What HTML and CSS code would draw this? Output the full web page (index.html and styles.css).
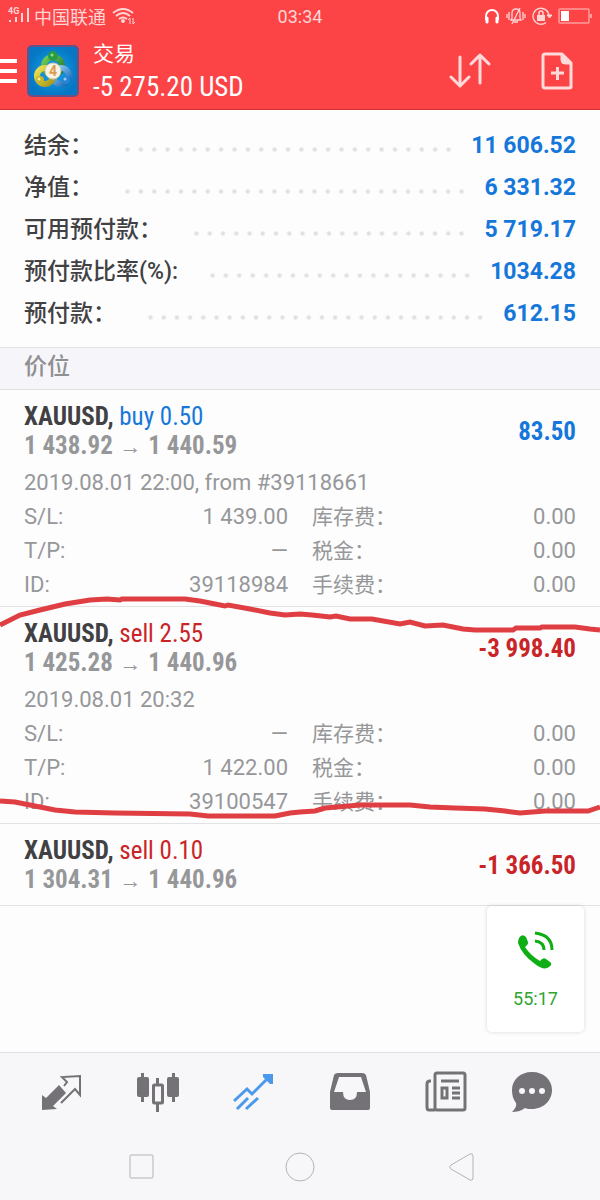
FILE: index.html
```html
<!DOCTYPE html>
<html lang="zh-CN">
<head>
    <meta charset="UTF-8">
    <meta name="viewport" content="width=device-width, initial-scale=1.0">
    <title>交易</title>
    <link rel="stylesheet" href="styles.css">
</head>
<body>
    <header class="header">
        <div class="status">
            <div class="status-left">
                <svg width="24" height="18" viewBox="0 0 24 18" fill="#ffd5d5">
                    <path d="M1 13h2v2H1zM7 10h2v5H7zM13 6h2v9h-2zM19 1h2v14h-2z"/>
                    <text x="0" y="7" class="signal-type">4G</text>
                </svg>
                <span>中国联通</span>
                <svg width="24" height="18" viewBox="0 0 24 18" fill="none" stroke="#ffd5d5" stroke-width="2">
                    <path d="M1 6q10-8 20 0M4 9q7-6 14 0M7 12q4-3 8 0"/>
                    <circle cx="11" cy="14" r="1"/>
                    <path d="M18 17v-6l-2 2M21 11v6l2-2" stroke-width="1"/>
                </svg>
            </div>
            <span class="clock">03:34</span>
            <div class="status-right">
                <svg width="16" height="16" viewBox="0 0 16 16" fill="none" stroke="#fff" stroke-width="2">
                    <path d="M2 12V8a6 6 0 0 1 12 0v4"/>
                    <path d="M3 10v4M13 10v4" stroke-width="3" stroke-linecap="round"/>
                </svg>
                <svg width="20" height="18" viewBox="0 0 20 18" fill="none" stroke="#ffd5d5" stroke-width="1">
                    <path d="M5 13l1-2V6q0-4 4-4t4 4v5l1 2zM8 15h4M14 1L6 17M1 7v4M3 5v8M17 5v8M19 7v4" stroke-width="1.3"/>
                </svg>
                <svg width="20" height="18" viewBox="0 0 20 18" fill="none" stroke="#ffd5d5">
                    <path d="M14 15.500A8 8 0 1 1 17 9" stroke-width="1.3"/>
                    <path d="M15 8h5l-2.500 3z" fill="#ffd5d5"/>
                    <path d="M5 8h8v6H5z" fill="#ffd5d5" stroke="none"/>
                    <path d="M7 8V6q0-2 2-2t2 2v2" stroke-width="1.5"/>
                </svg>
                <svg width="34" height="16" viewBox="0 0 34 16">
                    <rect x="1" y="1" width="30" height="14" rx="1" fill="none" stroke="#ff9c9c" stroke-width="1.500"/>
                    <path d="M3 3h8v10H3z" fill="#fff"/>
                    <path d="M32 6h2v4h-2z" fill="#ff9c9c"/>
                </svg>
            </div>
        </div>
        <div class="toolbar">
            <button class="menu" type="button" aria-label="菜单">
                <svg width="17" height="26" viewBox="0 0 17 26"><path d="M0 3h17M0 13h17M0 23h17" stroke="#fff" stroke-width="4"/></svg>
            </button>
            <svg class="logo" width="52" height="52" viewBox="0 0 52 52">
                <defs>
                    <radialGradient id="sky"><stop offset="0" stop-color="#18a5ea"/><stop offset="1" stop-color="#0577c4"/></radialGradient>
                    <linearGradient id="green" x1="0" y1="0" x2="1" y2="1"><stop offset="0" stop-color="#72cf56"/><stop offset="1" stop-color="#18752e"/></linearGradient>
                    <linearGradient id="gold" x1="0" y1="0" x2="1" y2="1"><stop offset="0" stop-color="#efe052"/><stop offset="1" stop-color="#a6981c"/></linearGradient>
                    <linearGradient id="blue" x1="0" y1="0" x2="1" y2="1"><stop offset="0" stop-color="#9bd6fb"/><stop offset="1" stop-color="#1565b4"/></linearGradient>
                </defs>
                <rect x="1" y="1" width="50" height="50" rx="4" fill="url(#sky)" stroke="#6a5089" stroke-width="2"/>
                <g fill="none" stroke-width="6">
                    <circle cx="26" cy="21" r="9" stroke="url(#green)"/>
                    <circle cx="34" cy="31" r="8" stroke="url(#blue)"/>
                    <circle cx="18" cy="31" r="8" stroke="url(#gold)"/>
                </g>
                <circle cx="26" cy="11" r="5" fill="#2a9b47"/>
                <circle cx="13" cy="35" r="4" fill="#c7b42a"/>
                <circle cx="39" cy="35" r="4" fill="#2684d4"/>
                <circle cx="25" cy="10" r="1.500" fill="#8fdc86"/>
                <circle cx="12" cy="34" r="1.500" fill="#f7f08f"/>
                <circle cx="38" cy="34" r="1.500" fill="#8fcdf7"/>
                <circle cx="26" cy="26" r="8" fill="#f8f2e4" stroke="#cfc9ae"/>
                <text x="26" y="31" class="logo-number">4</text>
            </svg>
            <div class="account">
                <h1>交易</h1>
                <p>-5 275.20 USD</p>
            </div>
            <div class="actions">
                <button type="button" aria-label="排序">
                    <svg width="42" height="38" viewBox="0 0 42 38" fill="none" stroke="#ffdada" stroke-width="3" stroke-linecap="round" stroke-linejoin="round"><path d="M11 5v29M2 25l9 9 9-9M31 31V3M22 12l9-9 9 9"/></svg>
                </button>
                <button type="button" aria-label="新订单">
                    <svg width="32" height="38" viewBox="0 0 32 38" fill="none" stroke="#ffdada"><path d="M4 2h17l9 9v24q0 1-2 1H4q-2 0-2-2V4q0-2 2-2z" stroke-width="3" stroke-linejoin="round"/><path d="M20 2v6q0 4 4 4h6z" fill="#ffdada"/><path d="M10 21h13M16.500 15v13" stroke-width="3"/></svg>
                </button>
            </div>
        </div>
    </header>

    <main>
        <dl class="summary">
            <div class="summary-row"><dt>结余：</dt><dd>11 606.52</dd></div>
            <div class="summary-row"><dt>净值：</dt><dd>6 331.32</dd></div>
            <div class="summary-row"><dt>可用预付款：</dt><dd>5 719.17</dd></div>
            <div class="summary-row"><dt>预付款比率(%):</dt><dd>1034.28</dd></div>
            <div class="summary-row"><dt>预付款：</dt><dd>612.15</dd></div>
        </dl>

        <h2 class="section-title">价位</h2>

        <article class="trade">
            <div class="trade-head">
                <div>
                    <h3>XAUUSD, <span class="buy">buy 0.50</span></h3>
                    <p class="prices">1 438.92 <span class="arrow">→</span> 1 440.59</p>
                </div>
                <strong class="profit buy">83.50</strong>
            </div>
            <div class="trade-details">
                <p>2019.08.01 22:00, from #39118661</p>
                <dl>
                    <dt>S/L:</dt><dd>1 439.00</dd><dt>库存费：</dt><dd>0.00</dd>
                    <dt>T/P:</dt><dd>—</dd><dt>税金：</dt><dd>0.00</dd>
                    <dt>ID:</dt><dd>39118984</dd><dt>手续费：</dt><dd>0.00</dd>
                </dl>
            </div>
        </article>

        <article class="trade">
            <div class="trade-head">
                <div>
                    <h3>XAUUSD, <span class="sell">sell 2.55</span></h3>
                    <p class="prices">1 425.28 <span class="arrow">→</span> 1 440.96</p>
                </div>
                <strong class="profit sell">-3 998.40</strong>
            </div>
            <div class="trade-details">
                <p>2019.08.01 20:32</p>
                <dl>
                    <dt>S/L:</dt><dd>—</dd><dt>库存费：</dt><dd>0.00</dd>
                    <dt>T/P:</dt><dd>1 422.00</dd><dt>税金：</dt><dd>0.00</dd>
                    <dt>ID:</dt><dd>39100547</dd><dt>手续费：</dt><dd>0.00</dd>
                </dl>
            </div>
            <!-- hand-drawn marker -->
            <svg class="marker" viewBox="0 590 600 234" preserveAspectRatio="none">
                <path d="M0 624L20 614 40 609 65 603 90 599 107 598 120 599 122 598 185 598 200 600 215 603 225 605 228 604 250 608 270 612 285 614 300 613 312 614 330 616 336 615 350 618 372 618 400 623 410 621 425 625 443 624 463 628 475 629 513 629 516 627 540 627 542 626 575 626 590 628 600 629"/>
                <path d="M0 800L15 801 35 805 55 809 75 811 115 812 190 813 208 815 275 815 290 812 300 811 315 810 325 807 360 804 410 804 430 806 455 807 485 808 505 810 520 812 545 810 588 810 597 807 600 806"/>
            </svg>
        </article>

        <article class="trade collapsed">
            <div class="trade-head">
                <div>
                    <h3>XAUUSD, <span class="sell">sell 0.10</span></h3>
                    <p class="prices">1 304.31 <span class="arrow">→</span> 1 440.96</p>
                </div>
                <strong class="profit sell">-1 366.50</strong>
            </div>
        </article>
    </main>

    <footer class="footer">
        <button class="call" type="button">
            <svg width="38" height="38" viewBox="0 0 38 38"><path d="M2 7Q5 2 9 6L11 11Q12 13 8 16Q14 25 23 30Q26 26 29 28L33 31Q36 33 32 36Q27 40 18 33Q5 24 1 12Q1 9 2 7Z" fill="#0fae14"/><path d="M18 2q17 2 17 17M18 10q9 1 9 9" fill="none" stroke="#0fae14" stroke-width="3"/></svg>
            <span>55:17</span>
        </button>
        <nav class="tabs">
            <button type="button" aria-label="行情">
                <svg width="42" height="42" viewBox="0 0 42 42"><path d="M1 39V24l4 3 13-13 7 8-13 13 4 3z" fill="#747276"/><path d="M20 32l14-14 5 6V5L21 6l5 5-3 4" fill="none" stroke="#747276" stroke-width="2"/></svg>
            </button>
            <button type="button" aria-label="图表">
                <svg width="42" height="42" viewBox="0 0 42 42" fill="#747276"><rect y="6" width="12" height="20" rx="2"/><rect x="30" y="6" width="12" height="20" rx="2"/><path d="M4 2h3v29H4zM35 2h3v29h-3zM19 7h3v7h-3zM19 33h3v8h-3z"/><rect x="16.500" y="14" width="9" height="18" rx="1" fill="#f7f6f9" stroke="#747276" stroke-width="3"/></svg>
            </button>
            <button type="button" aria-label="交易">
                <svg width="42" height="42" viewBox="0 0 42 42" fill="none" stroke="#4b99ea" stroke-width="3"><path d="M1 30l13-12 5 5L37 5M4 38l11-11M13 38l12-11"/><path d="M30 3h10v10h-3L30 6z" fill="#4b99ea" stroke="none"/></svg>
            </button>
            <button type="button" aria-label="历史">
                <svg width="42" height="42" viewBox="0 0 42 42"><path d="M9 2h24q3 0 4 2l4 17v16q0 2-2 2H3q-2 0-2-2V21L5 4q1-2 4-2zM10 6L5 21h9q0 8 7 8t7-8h9L32 6z" fill="#747276" fill-rule="evenodd"/></svg>
            </button>
            <button type="button" aria-label="新闻">
                <svg width="42" height="42" viewBox="0 0 42 42" fill="none" stroke="#747276" stroke-width="3"><rect x="10" y="2" width="30" height="37" rx="2"/><path d="M10 39H4q-2 0-2-3V13q0-3 3-3h1M16 10h18M27 17h8M27 22h8M27 27h8"/><rect x="17" y="17" width="5" height="10"/></svg>
            </button>
            <button type="button" aria-label="消息">
                <svg width="42" height="42" viewBox="0 0 42 42"><path d="M21 1c12 0 20 8 20 18s-8 19-20 19c-3 0-5 0-7-1-4 3-9 4-13 4 3-3 5-6 4-9-3-4-4-8-4-13C1 9 9 1 21 1z" fill="#747276"/><g fill="#f7f6f9"><circle cx="11" cy="20" r="3"/><circle cx="21" cy="20" r="3"/><circle cx="31" cy="20" r="3"/></g></svg>
            </button>
        </nav>
        <nav class="system">
            <button type="button" aria-label="最近任务"><svg width="32" height="32" viewBox="0 0 32 32"><rect x="6" y="4" width="23" height="23" rx="1"/></svg></button>
            <button type="button" aria-label="主屏幕"><svg width="32" height="32" viewBox="0 0 32 32"><circle cx="16" cy="16" r="14"/></svg></button>
            <button type="button" aria-label="返回"><svg width="32" height="32" viewBox="0 0 32 32"><path d="M7 14L26 3q3-1 3 2v22q0 3-3 2L7 18q-3-2 0-4z"/></svg></button>
        </nav>
    </footer>
</body>
</html>
```

FILE: styles.css
```css
* {
    box-sizing: border-box;
    margin: 0;
    padding: 0;
}

body {
    display: flex;
    flex-direction: column;
    min-height: 100vh;
    background: #fdfdfe;
    color: #414143;
    font-family: Roboto, "Noto Sans CJK SC", sans-serif;
}

button {
    border: none;
    background: none;
    font-family: inherit;
    cursor: pointer;
}

svg {
    display: block;
}

/* header */
.header {
    background: #fc4447;
    border-bottom: 1px solid #c93238;
    color: #fff;
}

.status {
    display: grid;
    grid-template-columns: 1fr auto 1fr;
    align-items: center;
    height: 32px;
    padding: 0 8px;
    color: #ffd5d5;
    font-size: 18px;
}

.status-left,
.status-right {
    display: flex;
    align-items: center;
}

.status-left {
    gap: 2px;
}

.status-left span {
    margin-right: 4px;
}

.status-right {
    justify-content: flex-end;
    gap: 6px;
}

.signal-type {
    font-size: 9px;
    font-weight: 700;
}

.toolbar {
    display: flex;
    align-items: center;
    height: 77px;
    padding-right: 27px;
}

.logo {
    margin: 0 14px 0 10px;
}

.logo-number {
    fill: #dc9b52;
    font-size: 14px;
    font-weight: bold;
    text-anchor: middle;
}

.account h1 {
    font-size: 21px;
    font-weight: 400;
    line-height: 32px;
}

.account p {
    font-family: "Roboto Condensed", Roboto, sans-serif;
    font-size: 27px;
    line-height: 34px;
}

.actions {
    display: flex;
    gap: 50px;
    margin-left: auto;
}

/* balance */
.summary {
    padding: 15px 24px 12px;
    border-bottom: 1px solid #e2e2e5;
}

.summary-row {
    display: flex;
    height: 42px;
    font-size: 23px;
    font-weight: 500;
    line-height: 42px;
}

.summary-row::after {
    content: "";
    flex: 1;
    order: 1;
    margin: 6px 16px 0 28px;
    background: radial-gradient(circle, #dedee1 1px, transparent 3px) left center / 13px 13px;
    background-repeat: space no-repeat;
}

.summary dd {
    order: 2;
    color: #1677da;
    font-weight: 700;
}

.section-title {
    height: 42px;
    padding: 0 24px;
    background: #f6f5f9;
    border-bottom: 1px solid #e2e2e5;
    color: #8f8f92;
    font-size: 23px;
    font-weight: 500;
    line-height: 38px;
}

/* positions */
.trade {
    position: relative;
    padding: 12px 24px 4px;
    border-bottom: 1px solid #e2e2e5;
}

.trade.collapsed {
    padding-bottom: 11px;
}

.trade-head {
    display: flex;
    justify-content: space-between;
    align-items: center;
    font-family: "Roboto Condensed", Roboto, sans-serif;
    font-size: 25px;
    line-height: 29px;
}

.trade-head h3 {
    font-size: 25px;
}

.trade-head h3 span {
    font-weight: 400;
}

.prices {
    color: #969799;
    font-weight: 700;
}

.arrow {
    margin: 0 1px;
    font-family: "Liberation Sans", sans-serif;
    font-size: 22px;
    font-weight: 400;
    line-height: 22px;
}

.buy {
    color: #1677da;
}

.sell {
    color: #c92428;
}

.trade-details {
    margin-top: 6px;
    color: #969799;
    font-size: 22px;
    line-height: 34px;
}

.trade-details dl {
    display: grid;
    grid-template-columns: 1fr 1fr 1fr 1fr;
}

.trade-details dd {
    text-align: right;
}

.trade-details dt:nth-of-type(even) {
    padding-left: 12px;
    font-size: 21px;
}

.trade-details dd:nth-of-type(odd) {
    padding-right: 12px;
}

.marker {
    position: absolute;
    top: -16px;
    left: 0;
    width: 100%;
    height: 234px;
    fill: none;
    stroke: #df3e42;
    stroke-width: 5px;
    pointer-events: none;
}

/* bottom bars */
.footer {
    position: relative;
    margin-top: auto;
    background: #f7f6f9;
    border-top: 1px solid #e2e2e5;
}

.call {
    position: absolute;
    right: 16px;
    bottom: 100%;
    display: flex;
    flex-direction: column;
    align-items: center;
    gap: 18px;
    width: 97px;
    height: 126px;
    margin-bottom: 21px;
    padding-top: 25px;
    background: #fff;
    border-radius: 5px;
    box-shadow: 0 0 4px rgba(0, 0, 0, 0.15);
    color: #2fa532;
    font-size: 18px;
    line-height: 24px;
}

.tabs {
    display: grid;
    grid-template-columns: repeat(5, 24fr) 19fr;
    justify-items: center;
    align-items: center;
    height: 77px;
    padding: 0 30px 0 14px;
}

.system {
    display: flex;
    justify-content: center;
    align-items: center;
    gap: 128px;
    height: 70px;
    padding-top: 3px;
}

.system svg {
    fill: none;
    stroke: #b4b3b7;
    stroke-width: 1px;
}
```
